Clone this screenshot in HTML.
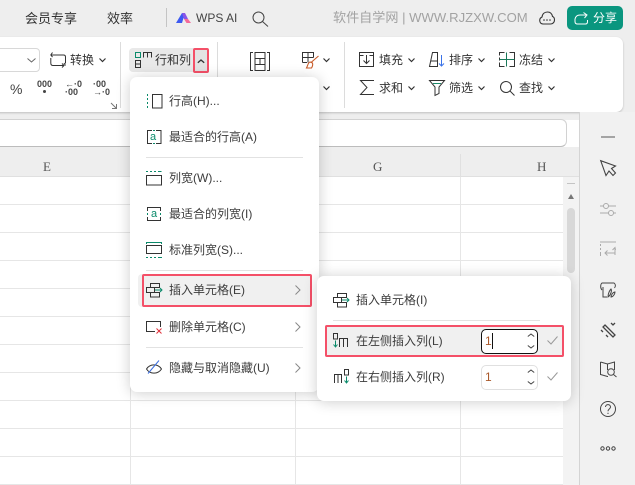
<!DOCTYPE html>
<html><head><meta charset="utf-8"><style>
html,body{margin:0;padding:0}
body{width:635px;height:485px;overflow:hidden;position:relative;background:#fff;font-family:"Liberation Sans","Noto Sans CJK SC",sans-serif;color:#333;font-size:12px}
.a{position:absolute}
.t{position:absolute;white-space:nowrap;line-height:16px;font-size:12px;color:#3c3c3c}
svg{position:absolute;overflow:visible;fill:none;stroke:#333;stroke-width:1}
.h{position:absolute;height:1px;background:#e6e6e6;left:0;width:565px}
.v{position:absolute;width:1px;background:#e6e6e6;top:177px;height:308px}
.menu{position:absolute;background:#fff;border-radius:7px;box-shadow:0 1px 14px rgba(0,0,0,.2)}
.sep{position:absolute;height:1px;background:#e2e2e2}
.red{position:absolute;border:2px solid #f45068;border-radius:2px;box-sizing:border-box}
.spin{position:absolute;width:57px;height:25px;box-sizing:border-box;background:#fff;border-radius:5px;border:1px solid #e0e0e0}
</style></head><body>
<!-- top bar -->
<div class="a" style="left:0;top:0;width:635px;height:120px;background:#eee"></div>
<div class="t" style="left:25px;top:11px;font-size:13px;color:#333">会员专享</div>
<div class="t" style="left:107px;top:11px;font-size:13px;color:#333">效率</div>
<div class="a" style="left:166px;top:8px;width:1px;height:19px;background:#c4c4c4"></div>
<svg style="left:176px;top:12px" width="16" height="12" viewBox="0 0 16 12"><path d="M0 11L6 1h3L6 11z" fill="#3d5af1" stroke="none"/><path d="M6 1h3l3 6H8z" fill="#8a55e8" stroke="none"/><path d="M8 7h4l3 4h-4.500z" fill="#f4699a" stroke="none"/></svg>
<div class="t" style="left:196px;top:10px;font-size:12px;color:#444">WPS AI</div>
<svg style="left:252px;top:11px" width="16" height="16"><circle cx="6.500" cy="6.500" r="5.500" stroke="#444"/><path d="M10.500 10.500L16 15.500" stroke="#444"/></svg>
<div class="t" style="left:333px;top:10px;font-size:13.100px;color:#a2a2a2">软件自学网 | WWW.RJZXW.COM</div>
<svg style="left:539px;top:11px" width="16" height="14"><path d="M4 13C1 13 .5 10 .8 8.500 1 7 2 6.500 3 6 3.500 2.500 6 1 8.500 1c3 0 4.500 2 5 4.500 1.500.5 2 2 2 3.500 0 2.500-2 4-4 4z" stroke="#333" stroke-width="1.100"/><circle cx="5" cy="9" r=".8" fill="#333" stroke="none"/><circle cx="8" cy="9" r=".8" fill="#333" stroke="none"/><circle cx="11" cy="9" r=".8" fill="#333" stroke="none"/></svg>
<div class="a" style="left:567px;top:6px;width:56px;height:24px;background:#0a967f;border-radius:5px"></div>
<svg style="left:574px;top:12px" width="15" height="13"><path d="M1 7v2.500Q1 12 3.500 12h8q2 0 2-2.500V8M1 7Q2 2.500 7 3h5M9.500.5L13 3l-2.500 3" stroke="#fff"/></svg>
<div class="t" style="left:593px;top:10px;font-size:12px;color:#fff">分享</div>
<!-- ribbon -->
<div class="a" style="left:-10px;top:37px;width:633px;height:75px;background:#fff;border-radius:7px;box-shadow:0 1px 2px rgba(0,0,0,.2)"></div>
<div class="a" style="left:-10px;top:48px;width:50px;height:24px;box-sizing:border-box;border:1px solid #d8d8d8;border-radius:4px"></div>
<svg style="left:27px;top:58px" width="9" height="5"><path d="M.5.500L4.500 4 8.500.500" stroke="#666"/></svg>
<svg style="left:50px;top:52px" width="17" height="16"><path d="M2.500.5L.8 3 2.500 5M.8 3H13.500Q15.500 3 15.500 5V11.500M14 11l1.500 2.500M.8 6V11Q.8 13.500 3 13.500H13.500M12 11.500L14 13.500 12 15.500" stroke="#333"/></svg>
<div class="t" style="left:70px;top:52px;color:#333">转换</div>
<svg style="left:99px;top:58px" width="7" height="5"><path d="M.5.500L3.500 3.500 6.500.500" stroke="#333" stroke-width="1.200"/></svg>
<div class="t" style="left:10px;top:81px;font-size:14px;color:#444">%</div>
<div class="t" style="left:37px;top:76px;font-size:9px;font-weight:bold;color:#444">000</div>
<div class="a" style="left:43px;top:90px;width:3px;height:3px;background:#444;border-radius:50%"></div>
<div class="t" style="left:65px;top:80px;font-size:9px;line-height:8px;font-weight:bold;color:#444;white-space:pre">←·0
·00</div>
<div class="t" style="left:93px;top:80px;font-size:9px;line-height:8px;font-weight:bold;color:#444;white-space:pre">·00
→·0</div>
<svg style="left:111px;top:103px" width="6" height="6"><path d="M0 0L5.500 5.500M5.500 1v4.500H1" stroke="#777"/></svg>
<div class="a" style="left:120px;top:42px;width:1px;height:66px;background:#dcdcdc"></div>
<div class="a" style="left:129px;top:48px;width:79px;height:24px;background:#e9e9e9;border-radius:4px"></div>
<svg style="left:135px;top:52px" width="17" height="16"><rect x=".5" y=".5" width="5" height="5" stroke="#0a8a6a"/><path d="M8.500 5.500v-5h8v5M12.500.5v5M.5 8.500h5v7h-5zM.5 12h5" stroke="#333"/></svg>
<div class="t" style="left:155px;top:52px;color:#333">行和列</div>
<div class="red" style="left:193px;top:48px;width:16px;height:25px;background:#e3e3e3"></div>
<svg style="left:197px;top:59px" width="8" height="5"><path d="M.8 3.800L4 1 7.200 3.800" stroke="#333" stroke-width="1.300"/></svg>
<div class="a" style="left:217px;top:42px;width:1px;height:66px;background:#dcdcdc"></div>
<svg style="left:250px;top:52px" width="20" height="19"><path d="M3 .5H.5V18.500H3M17 .5h2.500V18.500H17" stroke="#333"/><path d="M5 .5h10v18H5zM5 6.500h10M5 12.500h10M10 6.500v6" stroke="#333"/></svg>
<svg style="left:302px;top:52px" width="17" height="17"><path d="M.5 10.500V.5h11v5M.5 5.500h11M6 .5v10M.5 10.500H5" stroke="#333"/><path d="M16.500 4L9 10.500M8 10c-2 .5-2 3-3.500 6h5c1-1.500 1.500-3 1-5z" stroke="#c85a28" stroke-width="1.100"/></svg>
<svg style="left:323px;top:58px" width="7" height="5"><path d="M.5.500L3.500 3.500 6.500.500" stroke="#333" stroke-width="1.200"/></svg>
<svg style="left:323px;top:86px" width="7" height="5"><path d="M.5.500L3.500 3.500 6.500.500" stroke="#333" stroke-width="1.200"/></svg>
<div class="a" style="left:344px;top:42px;width:1px;height:66px;background:#dcdcdc"></div>
<svg style="left:359px;top:52px" width="15" height="15"><rect x=".5" y=".5" width="14" height="14" stroke="#333"/><path d="M.5 3.500h4M10.500 3.500h4" stroke="#333"/><path d="M7.500 3v8M4.500 8.500l3 3 3-3" stroke="#333"/></svg>
<div class="t" style="left:379px;top:52px;color:#333">填充</div>
<svg style="left:408px;top:58px" width="7" height="5"><path d="M.5.500L3.500 3.500 6.500.500" stroke="#333" stroke-width="1.200"/></svg>
<svg style="left:429px;top:52px" width="16" height="15"><path d="M.5 14.500L3.500.5h5v14zM2 9h6" stroke="#333"/><path d="M12.500 3v11M10 11.500l2.500 2.500 2.500-2.500" stroke="#3a72e8"/></svg>
<div class="t" style="left:449px;top:52px;color:#333">排序</div>
<svg style="left:478px;top:58px" width="7" height="5"><path d="M.5.500L3.500 3.500 6.500.500" stroke="#333" stroke-width="1.200"/></svg>
<svg style="left:499px;top:52px" width="16" height="15"><path d="M5.500.5H.5v3M.5 5.500v3M.5 10.500v4h5M10.500.5h5v14h-5" stroke="#333"/><path d="M7.500 .5v14M.5 7.500h15" stroke="#1a7a5a"/></svg>
<div class="t" style="left:519px;top:52px;color:#333">冻结</div>
<svg style="left:548px;top:58px" width="7" height="5"><path d="M.5.500L3.500 3.500 6.500.500" stroke="#333" stroke-width="1.200"/></svg>
<svg style="left:360px;top:80px" width="14" height="15"><path d="M14 .5H.5L7 7.500.5 14.500H14" stroke="#333"/></svg>
<div class="t" style="left:379px;top:80px;color:#333">求和</div>
<svg style="left:408px;top:86px" width="7" height="5"><path d="M.5.500L3.500 3.500 6.500.500" stroke="#333" stroke-width="1.200"/></svg>
<svg style="left:429px;top:80px" width="16" height="16"><path d="M.5.500h15L10 7v6.500l-4 2V7z" stroke="#333"/><path d="M4 3.500h8" stroke="#1a8a6a"/></svg>
<div class="t" style="left:449px;top:80px;color:#333">筛选</div>
<svg style="left:478px;top:86px" width="7" height="5"><path d="M.5.500L3.500 3.500 6.500.500" stroke="#333" stroke-width="1.200"/></svg>
<svg style="left:500px;top:81px" width="15" height="15"><circle cx="6" cy="6" r="5.500"/><path d="M10 10l4.500 4.500"/></svg>
<div class="t" style="left:519px;top:80px;color:#333">查找</div>
<svg style="left:548px;top:86px" width="7" height="5"><path d="M.5.500L3.500 3.500 6.500.500" stroke="#333" stroke-width="1.200"/></svg>
<!-- formula bar -->
<div class="a" style="left:-10px;top:119px;width:577px;height:28px;box-sizing:border-box;background:#fff;border:1px solid #d2d2d2;border-bottom-color:#bcbcbc;border-radius:6px"></div>
<!-- col headers -->
<div class="a" style="left:0;top:147px;width:580px;height:30px;background:#eee;border-bottom:1px solid #e0e0e0;box-sizing:border-box"></div>
<div class="a" style="left:460px;top:154px;width:1px;height:23px;background:#e0e0e0"></div>
<div class="a" style="left:295px;top:154px;width:1px;height:23px;background:#e0e0e0"></div>
<div class="a" style="left:130px;top:154px;width:1px;height:23px;background:#e0e0e0"></div>
<div class="t" style="left:43px;top:159px;font-family:'Liberation Serif',serif;font-size:13px;color:#555">E</div>
<div class="t" style="left:373px;top:159px;font-family:'Liberation Serif',serif;font-size:13px;color:#555">G</div>
<div class="t" style="left:537px;top:159px;font-family:'Liberation Serif',serif;font-size:13px;color:#555">H</div>
<!-- grid -->
<div class="h" style="top:204px"></div><div class="h" style="top:232px"></div><div class="h" style="top:260px"></div><div class="h" style="top:288px"></div><div class="h" style="top:316px"></div><div class="h" style="top:344px"></div><div class="h" style="top:372px"></div><div class="h" style="top:400px"></div><div class="h" style="top:428px"></div><div class="h" style="top:456px"></div><div class="h" style="top:484px"></div>
<div class="v" style="left:130px"></div><div class="v" style="left:295px"></div><div class="v" style="left:460px"></div>
<!-- scrollbar -->
<div class="a" style="left:563px;top:177px;width:16px;height:308px;background:#f3f3f3"></div>
<div class="a" style="left:567px;top:183px;width:8px;height:1px;background:#c4c4c4"></div>
<svg style="left:568px;top:194px" width="6" height="5"><path d="M3 0L6 5H0z" fill="#777" stroke="none"/></svg>
<div class="a" style="left:567px;top:208px;width:8px;height:65px;background:#d8d8d8;border-radius:4px"></div>
<!-- right panel -->
<div class="a" style="left:579px;top:112px;width:56px;height:373px;background:#f1f1f1;border-left:1px solid #d4d4d4;box-sizing:border-box"></div>
<div class="a" style="left:601px;top:136px;width:14px;height:2px;background:#a4a4a4"></div>
<svg style="left:600px;top:160px" width="16" height="17"><path d="M.7.700L15.500 6l-4 2.500L15.500 13 13 15.500 9 11l-3 4.500z" stroke="#444" stroke-width="1.100"/></svg>
<svg style="left:600px;top:201px" width="16" height="16"><path d="M0 5h4M8 5h8M0 12h9M13 12h3" stroke="#aaa"/><circle cx="6" cy="5" r="2.500" stroke="#aaa"/><circle cx="11" cy="12" r="2.500" stroke="#aaa"/></svg>
<svg style="left:600px;top:241px" width="16" height="16"><path d="M0 1h16M.5 3v2M.5 7v2M.5 11v4M15 14V6.500M12.500 9L15 6.500 15.500 9M15 12H5M7.500 9.500L5 12l2.500 2.500" stroke="#aaa"/></svg>
<svg style="left:600px;top:282px" width="16" height="16"><path d="M2 8C0 6 .5 2 2 1h12c1.500 1 2 3 .5 5M3 5v10h4" stroke="#444"/><path d="M8 15c0-4 2-7 3-8 1 1.500 0 6-3 8zM11 15c0-2 2-5 4-5 0 2-2 5-4 5z" stroke="#444"/></svg>
<svg style="left:600px;top:322px" width="16" height="16"><path d="M5 3L15 13 13 15 3 5zM1 8l2 2M6 13l2 2M11 1l2 2 2-2" stroke="#444" stroke-width="1.300"/></svg>
<svg style="left:600px;top:361px" width="17" height="17"><path d="M.5 1L7.500 3 14.500 1V9M.5 1V13.500L7.500 15.500H8M7.500 3V9" stroke="#444"/><circle cx="11" cy="11" r="3.300" stroke="#444"/><path d="M13.500 13.500L16.500 16" stroke="#444"/></svg>
<svg style="left:600px;top:401px" width="16" height="16"><circle cx="8" cy="8" r="7.500" stroke="#444"/><path d="M5.500 6C5.500 2.800 10.500 2.800 10.500 6 10.500 8 8 8 8 10.200M8 11.800v1.200" stroke="#444"/></svg>
<svg style="left:600px;top:446px" width="16" height="5"><circle cx="2.500" cy="2.500" r="1.700" stroke="#444"/><circle cx="8" cy="2.500" r="1.700" stroke="#444"/><circle cx="13.500" cy="2.500" r="1.700" stroke="#444"/></svg>

<!-- main menu -->
<div class="menu" style="left:130px;top:77px;width:189px;height:315px"></div>
<svg style="left:147px;top:93px" width="16" height="16"><path d="M.5 1v2M.5 5v2M.5 9v2M.5 13v2" stroke="#0a8a6a"/><rect x="5.500" y="1.500" width="9.500" height="13.500" stroke="#333"/></svg>
<div class="t" style="left:169px;top:93px">行高(H)...</div>
<svg style="left:146px;top:129px" width="16" height="16"><path d="M6 1.500H1.500v13H6M10 1.500h5v13H10" stroke="#333"/><path d="M7 1.500h2M7 14.500h2" stroke="#0a8a6a"/></svg>
<div class="t" style="left:150px;top:129px;font-size:11px;color:#0a8a6a">a</div>
<div class="t" style="left:169px;top:129px">最适合的行高(A)</div>
<div class="sep" style="left:146px;top:157px;width:157px"></div>
<svg style="left:146px;top:170px" width="16" height="16"><path d="M0 1.500h2M4 1.500h2M8 1.500h2M12 1.500h3.500" stroke="#0a8a6a"/><rect x=".5" y="5.500" width="15" height="9.500" stroke="#333"/></svg>
<div class="t" style="left:169px;top:170px">列宽(W)...</div>
<svg style="left:147px;top:206px" width="15" height="16"><path d="M.5 5V1.500h13V5M.5 11v3.500h13V11" stroke="#333"/><path d="M.5 7v2M13.500 7v2" stroke="#0a8a6a"/></svg>
<div class="t" style="left:151px;top:206px;font-size:11px;color:#0a8a6a">a</div>
<div class="t" style="left:169px;top:206px">最适合的列宽(I)</div>
<svg style="left:146px;top:242px" width="16" height="16"><path d="M0 .5h16M.5 0v2M15.500 0v2M0 15.500h2M4 15.500h2M8 15.500h2M12 15.500h4" stroke="#0a8a6a"/><rect x=".5" y="3.500" width="15" height="8" stroke="#333"/></svg>
<div class="t" style="left:169px;top:242px">标准列宽(S)...</div>
<div class="sep" style="left:146px;top:270px;width:157px"></div>
<div class="a" style="left:138px;top:274px;width:173px;height:33px;background:#f0f0f0;border-radius:4px"></div>
<div class="red" style="left:142px;top:274px;width:170px;height:33px"></div>
<svg style="left:146px;top:282px" width="16" height="16"><rect x="4.500" y="1.500" width="9" height="4" stroke="#333"/><rect x=".5" y="5.500" width="8" height="5" stroke="#333"/><rect x="4.500" y="10.500" width="9" height="4.500" stroke="#333"/><path d="M9 8h7M14 6l2 2-2 2" stroke="#0a8a6a"/></svg>
<div class="t" style="left:169px;top:282px">插入单元格(E)</div>
<svg style="left:295px;top:285px" width="6" height="10"><path d="M.5.500L5 5 .5 9.500" stroke="#888"/></svg>
<svg style="left:146px;top:319px" width="16" height="16"><path d="M9 12.500H.5V2.500h14V8" stroke="#333"/><path d="M10.500 9.500l5 5M15.500 9.500l-5 5" stroke="#e0303a"/></svg>
<div class="t" style="left:169px;top:319px">删除单元格(C)</div>
<svg style="left:295px;top:322px" width="6" height="10"><path d="M.5.500L5 5 .5 9.500" stroke="#888"/></svg>
<div class="sep" style="left:146px;top:347px;width:157px"></div>
<svg style="left:146px;top:360px" width="16" height="16"><path d="M.5 9C4 3.500 12 3.500 15.500 9 12 14.500 4 14.500 .5 9z" stroke="#333"/><path d="M13 .5L2 13.500" stroke="#3a6ee0"/></svg>
<div class="t" style="left:169px;top:360px">隐藏与取消隐藏(U)</div>
<svg style="left:295px;top:363px" width="6" height="10"><path d="M.5.500L5 5 .5 9.500" stroke="#888"/></svg>

<!-- sub menu -->
<div class="menu" style="left:317px;top:276px;width:254px;height:125px"></div>
<svg style="left:333px;top:292px" width="16" height="16"><rect x="4.500" y="1.500" width="9" height="4" stroke="#333"/><rect x=".5" y="5.500" width="8" height="5" stroke="#333"/><rect x="4.500" y="10.500" width="9" height="4.500" stroke="#333"/><path d="M9 8h7M14 6l2 2-2 2" stroke="#0a8a6a"/></svg>
<div class="t" style="left:356px;top:292px">插入单元格(I)</div>
<div class="sep" style="left:333px;top:320px;width:207px"></div>
<div class="a" style="left:325px;top:325px;width:239px;height:32px;background:#f0f0f0"></div>
<div class="red" style="left:325px;top:325px;width:239px;height:32px"></div>
<svg style="left:333px;top:333px" width="15" height="15"><rect x=".5" y=".5" width="4" height="5.500" stroke="#333"/><path d="M2.500 7.500v6.500M.5 11.500l2 2.500 2-2.500" stroke="#0a8a6a"/><path d="M6.500 14V5.500h4V14M10.500 5.500h4V14" stroke="#333"/></svg>
<div class="t" style="left:356px;top:333px">在左侧插入列(L)</div>
<div class="spin" style="left:481px;top:329px;border:1px solid #111"></div>
<div class="t" style="left:485px;top:333px;color:#a9582a">1</div>
<div class="a" style="left:492px;top:333px;width:1px;height:16px;background:#111"></div>
<svg style="left:527px;top:333px" width="8" height="16"><path d="M.8 3.500L4 1 7.200 3.500M.8 12.500L4 15 7.200 12.500" stroke="#444"/></svg>
<svg style="left:547px;top:336px" width="11" height="9"><path d="M.5 4.500L4 8 10.500.5" stroke="#999"/></svg>
<svg style="left:333px;top:369px" width="17" height="15"><path d="M1.500 14V5.500H5V14M5 5.500h3.500V14" stroke="#333"/><rect x="11.500" y=".5" width="4" height="5.500" stroke="#333"/><path d="M13.500 7.500v6.500M11.500 11.500l2 2.500 2-2.500" stroke="#0a8a6a"/></svg>
<div class="t" style="left:356px;top:369px">在右侧插入列(R)</div>
<div class="spin" style="left:481px;top:365px"></div>
<div class="t" style="left:485px;top:369px;color:#a9582a">1</div>
<svg style="left:527px;top:369px" width="8" height="16"><path d="M.8 3.500L4 1 7.200 3.500M.8 12.500L4 15 7.200 12.500" stroke="#444"/></svg>
<svg style="left:547px;top:372px" width="11" height="9"><path d="M.5 4.500L4 8 10.500.5" stroke="#999"/></svg>
</body></html>
